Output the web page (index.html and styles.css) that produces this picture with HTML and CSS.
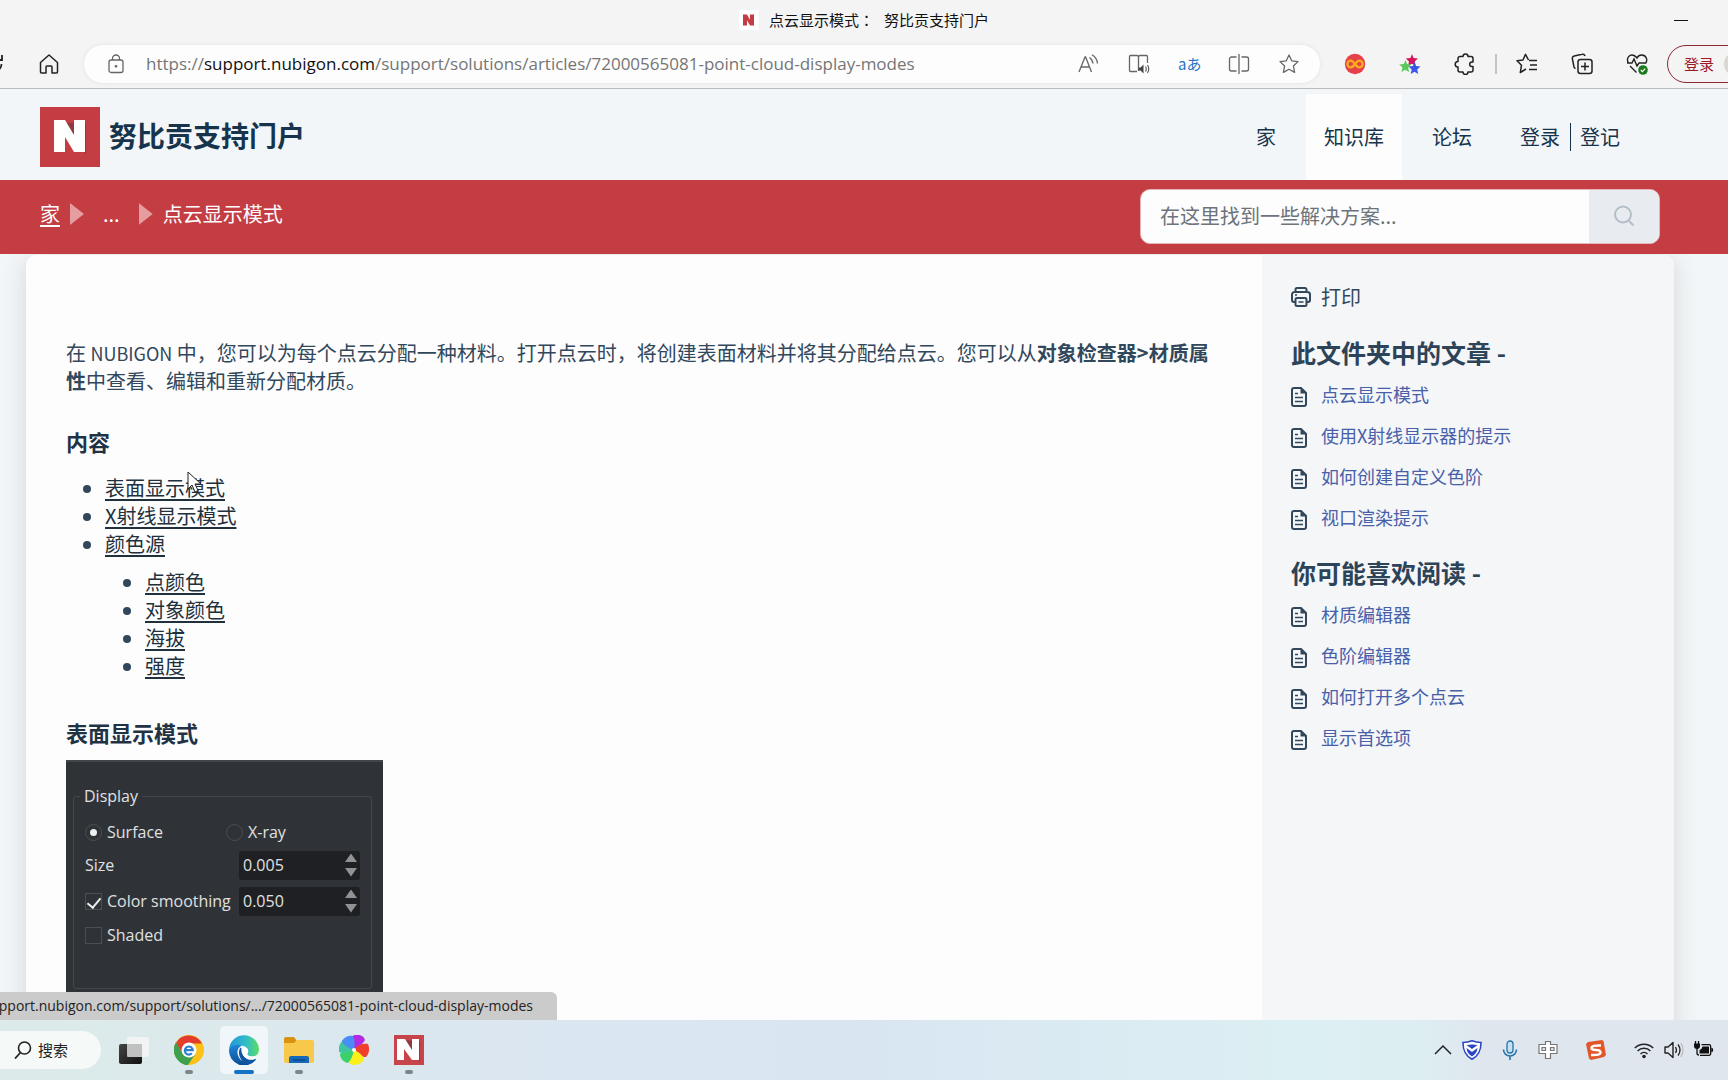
FILE: index.html
```html
<!DOCTYPE html>
<html lang="zh-CN">
<head>
<meta charset="utf-8">
<title>点云显示模式： 努比贡支持门户</title>
<link rel="stylesheet" href="styles.css">
</head>
<body>
<svg width="0" height="0" class="sprite" aria-hidden="true">
  <symbol id="doc" viewBox="0 0 16 20">
    <path d="M3 1h7l5 5v11a2 2 0 0 1-2 2H3a2 2 0 0 1-2-2V3a2 2 0 0 1 2-2z" fill="none" stroke="currentColor" stroke-width="2"/>
    <path d="M9.500 1v5.500H15z" fill="currentColor"/>
    <path d="M4 6.500h3M4 10.500h8M4 14.500h8" stroke="currentColor" stroke-width="1.600"/>
  </symbol>
  <symbol id="nmark" viewBox="0 0 30 30">
    <path d="M0 0h11l8 14V0h11v30H19l-8-14v14H0z" fill="currentColor"/>
  </symbol>
</svg>

<header class="browser">
  <div class="titlebar">
    <div class="tab-title">
      <span class="favicon"><svg width="11" height="12"><use href="#nmark"/></svg></span>
      <span>点云显示模式<span lang="zh-TW" class="colon">：</span>&nbsp;&nbsp;&nbsp;努比贡支持门户</span>
    </div>
    <button class="minimize" aria-label="最小化"></button>
  </div>
  <div class="toolbar">
    <button class="tool reload" aria-label="刷新"><svg width="20" height="20" viewBox="0 0 20 20"><path d="M17.500 10a7.500 7.500 0 1 1-3-6M18 1v5h-5" fill="none" stroke="#222" stroke-width="1.800"/></svg></button>
    <button class="tool home" aria-label="主页"><svg width="20" height="20" viewBox="0 0 20 20"><path d="M1.500 8.500 10 1l8.500 7.500V18a1 1 0 0 1-1 1H13v-6a1 1 0 0 0-1-1H8a1 1 0 0 0-1 1v6H2.500a1 1 0 0 1-1-1z" fill="none" stroke="#222" stroke-width="1.500" stroke-linejoin="round"/></svg></button>
    <div class="address">
      <svg width="16" height="20" viewBox="0 0 16 20"><path d="M4.500 6V4.500a3.500 3.500 0 0 1 7 0V6" fill="none" stroke="#666" stroke-width="1.300"/><rect x="1" y="6" width="14" height="12.500" rx="2" fill="none" stroke="#666" stroke-width="1.300"/><circle cx="8" cy="12.300" r="1.300" fill="#666"/></svg>
      <div class="url">https://<b>support.nubigon.com</b>/support/solutions/articles/72000565081-point-cloud-display-modes</div>
      <div class="address-tools">
        <button aria-label="朗读"><svg width="22" height="20" viewBox="0 0 22 20"><path d="M1 18 7 3h.6L13.500 18M3.500 13h8" fill="none" stroke="#666" stroke-width="1.300"/><path d="M11.500 3.500q3 2 3.500 6M14 .8q5 3 5.500 8.700" fill="none" stroke="#666" stroke-width="1.300"/></svg></button>
        <button aria-label="沉浸式阅读"><svg width="22" height="20" viewBox="0 0 22 20"><path d="M9 17.500H2.500a1 1 0 0 1-1-1V2.500a1 1 0 0 1 1-1H9a1.500 1.500 0 0 1 1.500 1.500v14M10.500 3A1.500 1.500 0 0 1 12 1.500h6.500a1 1 0 0 1 1 1V9" fill="none" stroke="#666" stroke-width="1.300"/><path d="M10.500 13.500h2l3-3v9l-3-3h-2z" fill="#444"/><path d="M17.500 12.500q1.500 2.500 0 5M19.500 11q2.500 4 0 8" fill="none" stroke="#555" stroke-width="1.100"/></svg></button>
        <button class="translate" aria-label="翻译">aあ</button>
        <button aria-label="分屏"><svg width="22" height="20" viewBox="0 0 22 20"><path d="M8.500 3H3.500a2 2 0 0 0-2 2v10a2 2 0 0 0 2 2h5M13.500 3h5a2 2 0 0 1 2 2v10a2 2 0 0 1-2 2h-5M11 0v20" fill="none" stroke="#666" stroke-width="1.300"/></svg></button>
        <button aria-label="收藏"><svg width="22" height="20" viewBox="0 0 22 20"><path d="m11 1 2.700 5.800 6.300.8-4.600 4.400 1.200 6.400L11 15.300l-5.600 3.100L6.600 12 2 7.600l6.300-.8z" fill="none" stroke="#666" stroke-width="1.300" stroke-linejoin="round"/></svg></button>
      </div>
    </div>
    <div class="extensions">
      <button aria-label="Infinity"><svg width="22" height="22" viewBox="0 0 22 22"><circle cx="11" cy="11" r="10.200" fill="#e5414a"/><path d="M11 11C9 8.300 8 7.600 6.800 7.600a3.400 3.400 0 0 0 0 6.800C8 14.400 9 13.700 11 11s3-3.400 4.200-3.400a3.400 3.400 0 0 1 0 6.800C14 14.400 13 13.700 11 11z" fill="none" stroke="#fbad1c" stroke-width="2.300"/></svg></button>
      <button aria-label="扩展"><svg width="22" height="22" viewBox="0 0 22 22"><path d="m13 1 1.500 4 4.500.5-3.300 3 1 4.500-3.700-2.200L9 13l1-4.500-3.200-3L11.500 5z" fill="#d3155b"/><path d="m6.500 7 1.500 4 4.200.5-3 3 .8 4.500-3.800-2.200L2.500 19l1-4.500-3.300-3L5 11z" fill="#5ac85a"/><path d="m15.500 9 1.500 4 4.500.5-3.300 3 1 4.500-3.700-2.200-3.800 2.200 1-4.500-3.200-3L14 13z" fill="#3b55e6"/></svg></button>
      <button aria-label="扩展管理"><svg width="22" height="22" viewBox="0 0 22 22"><path d="M6 3.500h3a2.500 2.500 0 0 1 5 0h3a2 2 0 0 1 2 2V9h-1a2.300 2.300 0 0 0 0 4.600h1V17a2 2 0 0 1-2 2h-3a2.500 2.500 0 0 1-5 0H6a2 2 0 0 1-2-2v-3a2.800 2.800 0 0 1 0-5.600V5.500a2 2 0 0 1 2-2z" fill="none" stroke="#222" stroke-width="1.500" stroke-linejoin="round"/></svg></button>
      <span class="divider"></span>
      <button aria-label="收藏夹"><svg width="22" height="22" viewBox="0 0 22 22"><path d="M13 7.500h8M14 12h7M13 16.500h8" stroke="#222" stroke-width="1.500"/><path d="m12.500 7-3-5.700L7 7l-6 .8 4.500 4.400L4.300 19.500 10 16" fill="none" stroke="#222" stroke-width="1.500" stroke-linejoin="round"/></svg></button>
      <button aria-label="集锦"><svg width="22" height="22" viewBox="0 0 22 22"><path d="M4.500 15.500A2.500 2.500 0 0 1 3 14L1.300 5.500A2.500 2.500 0 0 1 3.200 3L11 1.300A2.500 2.500 0 0 1 14 3" fill="none" stroke="#222" stroke-width="1.500"/><rect x="7" y="6.500" width="14" height="14" rx="2.500" fill="none" stroke="#222" stroke-width="1.500"/><path d="M14 9.500v8M10 13.500h8" stroke="#222" stroke-width="1.500"/></svg></button>
      <button aria-label="浏览器健康"><svg width="22" height="22" viewBox="0 0 22 22"><path d="M2.500 10C-.5 5 4 .5 8 2.500q2 1 3 2.500Q12.500 2 15.500 2c5 0 6.500 5 4 8.500M4 13l6.500 6.500M1 10h5l2-4 3 7 2-3h7" fill="none" stroke="#222" stroke-width="1.400"/><circle cx="17" cy="17" r="4.800" fill="#1c7a1c"/><path d="m14.800 17 1.600 1.600 2.800-3" fill="none" stroke="#fff" stroke-width="1.200"/></svg></button>
    </div>
    <button class="signin">登录<span class="avatar"></span></button>
  </div>
</header>

<div class="viewport">
  <header class="site-header">
    <a class="brand" href="#"><span class="logo"><svg width="32" height="34" viewBox="0 0 32 34"><path d="m2 2 30 32V4z" fill="#8d3a40"/><path d="M0 0h11l9 15V0h11v32H20l-9-15v15H0z" fill="#fff"/></svg></span><span class="brand-name">努比贡支持门户</span></a>
    <nav class="nav">
      <a href="#">家</a>
      <a class="active" href="#">知识库</a>
      <a href="#">论坛</a>
      <span class="account"><a href="#">登录</a><a href="#">登记</a></span>
    </nav>
  </header>

  <section class="band">
    <nav class="crumbs">
      <a href="#">家</a><i class="arrow"></i><span class="dots">...</span><i class="arrow"></i><span>点云显示模式</span>
    </nav>
    <form class="search">
      <input type="text" aria-label="搜索" placeholder="在这里找到一些解决方案...">
      <button type="button" aria-label="搜索"><svg width="22" height="22" viewBox="0 0 22 22"><circle cx="10" cy="9.500" r="8" fill="none" stroke="#b4bec7" stroke-width="2"/><path d="m15.500 15.500 5 5" stroke="#b4bec7" stroke-width="2"/></svg></button>
    </form>
  </section>

  <div class="card">
    <main class="article">
      <p>在 <span class="latin">NUBIGON</span> 中，您可以为每个点云分配一种材料。打开点云时，将创建表面材料并将其分配给点云。您可以从<strong>对象检查器&gt;材质属性</strong>中查看、编辑和重新分配材质。</p>
      <h2>内容</h2>
      <ul>
        <li><a href="#">表面显示模式</a></li>
        <li><a href="#">X射线显示模式</a></li>
        <li><a href="#">颜色源</a>
          <ul>
            <li><a href="#">点颜色</a></li>
            <li><a href="#">对象颜色</a></li>
            <li><a href="#">海拔</a></li>
            <li><a href="#">强度</a></li>
          </ul>
        </li>
      </ul>
      <h2 class="section">表面显示模式</h2>
      <div class="panel">
        <fieldset>
          <legend>Display</legend>
          <div class="row modes">
            <label><input type="radio" name="mode" checked>Surface</label>
            <label><input type="radio" name="mode">X-ray</label>
          </div>
          <div class="row spin-row">
            <label for="size">Size</label>
            <span class="spin"><input id="size" type="text" value="0.005"><i class="up"></i><i class="down"></i></span>
          </div>
          <div class="row spin-row">
            <label><input type="checkbox" checked>Color smoothing</label>
            <span class="spin"><input type="text" aria-label="Color smoothing" value="0.050"><i class="up"></i><i class="down"></i></span>
          </div>
          <div class="row">
            <label><input type="checkbox">Shaded</label>
          </div>
        </fieldset>
      </div>
    </main>
    <aside class="sidebar">
      <a class="print" href="#"><svg width="20" height="20" viewBox="0 0 20 20"><path d="M4.500 5V2.500A1.500 1.500 0 0 1 6 1h8a1.500 1.500 0 0 1 1.500 1.500V5M4.500 15H3a2 2 0 0 1-2-2V7.500A2.500 2.500 0 0 1 3.500 5h13A2.500 2.500 0 0 1 19 7.500V13a2 2 0 0 1-2 2h-1.500" fill="none" stroke="#31475b" stroke-width="2"/><rect x="4.500" y="11" width="11" height="8" rx="1.500" fill="none" stroke="#31475b" stroke-width="2"/><path d="M7.500 15h5M4 8h2" stroke="#31475b" stroke-width="1.500"/></svg>打印</a>
      <h3>此文件夹中的文章 -</h3>
      <ul>
        <li><svg width="16" height="20"><use href="#doc"/></svg><a href="#">点云显示模式</a></li>
        <li><svg width="16" height="20"><use href="#doc"/></svg><a href="#">使用X射线显示器的提示</a></li>
        <li><svg width="16" height="20"><use href="#doc"/></svg><a href="#">如何创建自定义色阶</a></li>
        <li><svg width="16" height="20"><use href="#doc"/></svg><a href="#">视口渲染提示</a></li>
      </ul>
      <h3>你可能喜欢阅读 -</h3>
      <ul>
        <li><svg width="16" height="20"><use href="#doc"/></svg><a href="#">材质编辑器</a></li>
        <li><svg width="16" height="20"><use href="#doc"/></svg><a href="#">色阶编辑器</a></li>
        <li><svg width="16" height="20"><use href="#doc"/></svg><a href="#">如何打开多个点云</a></li>
        <li><svg width="16" height="20"><use href="#doc"/></svg><a href="#">显示首选项</a></li>
      </ul>
    </aside>
  </div>

  <div class="status">https://support.nubigon.com/support/solutions/.../72000565081-point-cloud-display-modes</div>
  <svg class="cursor" width="16" height="24" viewBox="0 0 16 24"><path d="M1 1v17l4-4 3 7 3-1.500-3-6.500h6z" fill="#fff" stroke="#222" stroke-width="1"/></svg>
</div>

<footer class="taskbar">
  <button class="find"><svg width="18" height="18" viewBox="0 0 18 18"><circle cx="10.500" cy="7" r="6" fill="none" stroke="#222" stroke-width="1.600"/><path d="m6.500 11.500-5.500 6" stroke="#222" stroke-width="1.800"/></svg>搜索</button>
  <div class="apps">
    <button aria-label="任务视图"><svg width="30" height="30" viewBox="0 0 30 30"><defs><linearGradient id="tv" x2="1" y2="1"><stop stop-color="#444"/><stop offset="1" stop-color="#111"/></linearGradient></defs><rect x="0" y="9" width="23" height="20" rx="2" fill="url(#tv)"/><rect x="8" y="2" width="22" height="20" rx="2" fill="#f4f4f4" fill-opacity=".9"/><path d="M8 9h15v13H8z" fill="#b4b4b4" fill-opacity=".7"/></svg></button>
    <button class="open" aria-label="Chrome"><svg width="30" height="30" viewBox="0 0 30 30"><circle cx="15" cy="15" r="15" fill="#fbc116"/><path d="M2 7.500A15 15 0 0 1 28 8.500H15z" fill="#e33b2e"/><path d="M2 7.500A15 15 0 0 0 14 30l7.500-11.200L8.500 18.700z" fill="#3fa04f"/><path d="M2 7.500 8.500 18.700 15 8.500z" fill="#e33b2e"/><path d="M2 7.500 8.500 18.700 14 30A15 15 0 0 1 2 7.500z" fill="#3fa04f"/><circle cx="15" cy="15" r="7.500" fill="#fff"/><path d="M10.500 15.200h8.300a4 4 0 1 0-1 3" fill="none" stroke="#2d7fd0" stroke-width="2.200"/></svg></button>
    <button class="open current" aria-label="Edge"><svg width="30" height="30" viewBox="0 0 30 30"><defs><linearGradient id="eg" x1="0" x2="1"><stop stop-color="#2196d8"/><stop offset=".55" stop-color="#30bccb"/><stop offset="1" stop-color="#5bdc62"/></linearGradient><linearGradient id="eb" x2="0" y2="1"><stop stop-color="#1c86d6"/><stop offset="1" stop-color="#0d4b94"/></linearGradient></defs><path d="M.2 13A15 15 0 0 1 30 14c0 5-3 7.500-7 7.500-3.500 0-5.500-1.300-4.500-3 2-3-.5-7.500-6-8C7 10.200 3 11 .2 15z" fill="url(#eg)"/><path d="M0 15C2 10 8 8.700 13 10.500c-5 2-6 8-2.500 13 3 3.700 9 4.500 16.500 1A15 15 0 0 1 0 15z" fill="url(#eb)"/><path d="M11.500 12.500C7.500 19 12 27.500 19 29.500c4-1 7-3.500 8.500-6-6 3-12 .5-13.500-4.500-.6-3-.5-5-2.500-6.500z" fill="#0f55a0"/><path d="M12.500 14c-.8 5.500 4 10.500 10 10.500 2.500 0 4.500-.6 5.700-1.700-.3-1.400-2.700-1.300-5.200-1.300-3.500 0-5.500-1.300-4.500-3 1.500-2.500.5-5.500-2.500-6-2 0-3.300.5-3.500 1.500z" fill="#fff"/></svg></button>
    <button class="open" aria-label="文件资源管理器"><svg width="30" height="30" viewBox="0 0 30 30"><path d="M0 4a2 2 0 0 1 2-2h8l3 4h15v6H0z" fill="#d9940f"/><path d="M0 8h10l3-3h15a2 2 0 0 1 2 2v19a2 2 0 0 1-2 2H2a2 2 0 0 1-2-2z" fill="#f7c84a"/><path d="M5 28v-5a2 2 0 0 1 2-2h16a2 2 0 0 1 2 2v5z" fill="#1668b8"/><path d="M9 25h12" stroke="#0c4a8c" stroke-width="1.500"/></svg></button>
    <button aria-label="照片"><svg width="30" height="30" viewBox="0 0 30 30"><path d="M15 15C10 12 10 4 15 0c6-1 10 1 11 5-3 5-6 7-11 10z" fill="#b32be0"/><path d="M15 15c3-5 8-7 14-6 2 5 1 10-2 13-5 0-9-2-12-7z" fill="#ef3f2f"/><path d="M15 15c5 2 9 5 10 10-4 5-10 6-14 4-1-6 1-10 4-14z" fill="#f9f01c"/><path d="M15 15c-1 5-3 10-6 13-5-1-8-5-8-9 4-4 9-5 14-4z" fill="#3cd06a"/><path d="M15 15C10 17 4 19 0 17c-1-5 1-9 4-12 5 1 10 5 11 10z" fill="#3fc6a0"/><path d="M15 15C9 13 4 10 3 6c2-4 7-6 11-5 2 4 2 9 1 14z" fill="#4a8cf5"/><circle cx="15" cy="15" r="2" fill="#fff"/></svg></button>
    <button class="open" aria-label="Nubigon"><svg width="30" height="30" viewBox="0 0 30 30"><path d="M0 0h30v30H0z" fill="#c7444b"/><path d="m4 5 22 22V6z" fill="#8d3a40"/><path d="M3 4h8l7 11V4h7v21h-7l-8-11v11H3z" fill="#fff"/></svg></button>
  </div>
  <div class="tray">
    <svg width="18" height="20" viewBox="0 0 18 20"><path d="m1 14 8-8 8 8" fill="none" stroke="#222" stroke-width="1.500"/></svg>
    <svg width="20" height="20" viewBox="0 0 20 20"><path d="M10 .8C7 2 4 2.500 1 2.500c0 8 2 13 9 16.700 7-3.700 9-8.700 9-16.700-3 0-6-.5-9-1.700z" fill="#fff" stroke="#2b45c9" stroke-width="1.600"/><path d="M4.500 5q6-1 11 0L10 9zM4.500 8 10 12l5.500-4q-.5 5.500-5.500 8.500Q5 13.500 4.500 8z" fill="#2b45c9"/></svg>
    <svg class="mid" width="16" height="20" viewBox="0 0 16 20"><rect x="5" y="1" width="6" height="12" rx="3" fill="#c5e2f4" stroke="#2673a9" stroke-width="1.300"/><path d="M1.500 9.500a6.500 6.500 0 0 0 13 0M8 16v4" fill="none" stroke="#2673a9" stroke-width="1.600"/></svg>
    <svg class="mid" width="20" height="20" viewBox="0 0 20 20"><path d="M7.500 1.500h5v3H19v9h-6.500v5h-5v-5H1v-9h6.500zM4 7.500v3h3.500v-3zM12.500 7.500v3H16v-3z" fill="#fff" fill-rule="evenodd" stroke="#777" stroke-width="1.200"/></svg>
    <svg class="wide" width="20" height="20" viewBox="0 0 20 20"><path d="m0 4 2-2 14-2 1.500 1L20 15l-2 2-13 3-2-1.500z" fill="#e2562a"/><path d="M15 5.500Q5.500 5 5.500 8q0 2 4.500 2t4.500 2.500q0 3-9.500 2.500" fill="none" stroke="#fff" stroke-width="2.400"/></svg>
    <svg class="wide" width="20" height="20" viewBox="0 0 20 20"><path d="M.8 8a13 13 0 0 1 18.400 0M3.600 11a9 9 0 0 1 12.800 0M6.500 14a5 5 0 0 1 7 0" fill="none" stroke="#222" stroke-width="1.500"/><circle cx="10" cy="16.500" r="1.800" fill="#222"/></svg>
    <svg width="20" height="20" viewBox="0 0 20 20"><path d="M1 7h3l5-4.500v15L4 13H1z" fill="none" stroke="#222" stroke-width="1.400" stroke-linejoin="round"/><path d="M11.500 7q2 3 0 6M14 4.500q4 5.500 0 11" fill="none" stroke="#222" stroke-width="1.300"/><path d="M16.800 3q4.500 7 0 14" fill="none" stroke="#bbb" stroke-width="1.200"/></svg>
    <svg width="20" height="20" viewBox="0 0 20 20"><path d="M1.500 1v3M4.500 1v3M3 8v5q0 2 2 2" fill="none" stroke="#111" stroke-width="1.300"/><path d="M0 3.500h6V6Q6 9 3 9T0 6z" fill="#111"/><path d="M7.500 4.700H15A1.700 1.700 0 0 1 16.700 6.400v7.200a1.700 1.700 0 0 1-1.700 1.700H6" fill="none" stroke="#111" stroke-width="1.300"/><path d="M8.500 6.500H15v7H5.500V10q2.500-.8 3-3.500zM17.300 8h1.200q1.500 2 0 4h-1.200z" fill="#111"/></svg>
  </div>
</footer>
</body>
</html>
```

FILE: styles.css
```css
* { box-sizing: border-box; }

body {
  margin: 0;
  height: 100vh;
  display: flex;
  flex-direction: column;
  overflow: hidden;
  background: #f3f6f8;
  font-family: "Noto Sans CJK SC", sans-serif;
  font-size: 20px;
  line-height: 28px;
  color: #31475b;
}

a { color: inherit; text-decoration: none; }
button { border: 0; padding: 0; background: none; font: inherit; color: inherit; }
svg { display: block; flex: none; }
ul { margin: 0; padding: 0; }
.sprite { position: absolute; }

/* Browser chrome */
.browser { background: #f4f4f4; border-bottom: 1px solid #b9bbbd; }
.titlebar { height: 40px; display: grid; grid-template-columns: 1fr auto 1fr; align-items: center; }
.tab-title { grid-column: 2; display: flex; align-items: center; gap: 10px; font-size: 15px; line-height: 20px; color: #111; }
.colon { font-family: "Noto Sans CJK TC", sans-serif; }
.favicon { width: 20px; height: 20px; display: grid; place-items: center; background: #fff; color: #c33d43; }
.minimize { justify-self: end; width: 14px; height: 1px; margin-right: 40px; background: #111; }

.toolbar { height: 48px; display: flex; align-items: center; padding-bottom: 1px; }
.tool.reload { margin-left: -16px; }
.tool.home { margin-left: 35px; }
.address {
  flex: 1;
  height: 38px;
  margin-left: 25px;
  padding: 0 20px 0 24px;
  display: flex;
  align-items: center;
  gap: 22px;
  border-radius: 19px;
  background: #fdfdfd;
  box-shadow: 0 0 4px #e2e2e2;
}
.url { flex: 1; font-family: "Open Sans", sans-serif; font-size: 17px; line-height: 24px; color: #757575; white-space: nowrap; }
.url b { font-weight: 400; color: #111; }
.address-tools { display: flex; align-items: center; gap: 28px; }
.address-tools button { width: 22px; white-space: nowrap; }
.translate { font-size: 15px; line-height: 20px; color: #2474c8; }
.extensions { display: flex; align-items: center; gap: 33px; margin: 0 19px 0 24px; }
.divider { width: 2px; height: 20px; margin: 0 -14px; background: #c4c4c4; }
.signin {
  flex: none;
  width: 80px;
  height: 38px;
  margin-right: -19px;
  padding-left: 16px;
  display: flex;
  align-items: center;
  gap: 10px;
  border: 1px solid #8c2632;
  border-radius: 19px;
  font-size: 15px;
  color: #a01828;
  white-space: nowrap;
}
.avatar { flex: none; width: 24px; height: 24px; border-radius: 12px; background: #d8d8d0; }

/* Support portal */
.viewport { position: relative; flex: 1; min-height: 0; overflow: hidden; }
.site-header { height: 91px; padding: 0 108px 0 40px; display: flex; justify-content: space-between; align-items: center; color: #16344c; }
.brand { display: flex; align-items: center; gap: 9px; padding-top: 4px; font-size: 28px; line-height: 40px; font-weight: 700; }
.brand-name { padding-bottom: 4px; }
.logo { width: 60px; height: 60px; display: grid; place-items: center; background: #c33d43; }
.nav { display: flex; align-items: center; gap: 12px; align-self: flex-end; }
.nav > * { display: flex; align-items: center; height: 86px; padding: 0 18px; }
.nav .active { background: #fdfdfd; }
.nav .account { padding-right: 0; }
.account a + a { margin-left: 10px; padding-left: 9px; border-left: 1px solid #16344c; }

.band { position: relative; z-index: 1; height: 74px; padding: 0 68px 2px 40px; display: flex; justify-content: space-between; align-items: center; background: #c33d43; color: #fff; }
.crumbs { display: flex; align-items: center; padding-bottom: 4px; }
.crumbs a { text-decoration: underline; text-underline-offset: 3px; }
.arrow { width: 14px; height: 22px; margin: 0 10px; background: #e59da0; clip-path: polygon(0 0, 100% 50%, 0 100%); }
.dots { padding: 0 9px; }
.search { width: 520px; height: 55px; display: flex; border: 1px solid #e5b5b8; border-radius: 10px; overflow: hidden; background: #fdfdfd; }
.search input { flex: 1; min-width: 0; border: 0; padding: 0 19px; background: none; font: inherit; color: #333; }
.search input::placeholder { color: #6d737a; opacity: 1; }
.search button { width: 70px; display: grid; place-items: center; background: #e8ecf0; }

.card { margin: 1px 54px 0 26px; display: grid; grid-template-columns: 3fr 1fr; border-radius: 10px; background: #fdfdfd; box-shadow: 0 4px 24px #d3d7da; overflow: hidden; }
.article { padding: 84px 40px 80px; }
.article p { margin: 0 0 30px; }
.latin { font-size: 18px; }
.article h2 { margin: 0 0 17px; font-size: 22px; line-height: 32px; color: #1f3345; }
.article ul { padding-left: 39px; list-style: disc; }
.article ul ul { margin-top: 10px; padding-left: 40px; }
.article li a { color: #21303d; text-decoration: underline; text-decoration-thickness: 2px; text-underline-offset: 3px; }
.article .section { margin: 36px 0 12px; }

.panel { width: 317px; height: 240px; padding: 22px 11px 4px 7px; border-top: 2px solid #42464b; background: #2f3338; color: #e0e0e0; font-family: "Open Sans", sans-serif; font-size: 16px; line-height: 24px; }
.panel fieldset { height: 205px; margin: 0; padding: 9px 11px 0; border: 1px solid #43484d; border-radius: 3px; }
.panel legend { margin-left: -5px; padding: 0 4px; }
.row { display: flex; align-items: center; height: 32px; }
.row label { display: flex; align-items: center; gap: 5px; white-space: nowrap; }
.modes { display: grid; grid-template-columns: 141px 1fr; height: 30px; }
.spin-row { justify-content: space-between; height: 36px; }
.panel input[type="radio"], .panel input[type="checkbox"] { appearance: none; width: 17px; height: 17px; margin: 0; border: 1px solid #4a4f55; display: grid; place-items: center; }
.panel input[type="radio"] { border-radius: 9px; }
.panel input[type="radio"]:checked::before { content: ""; width: 7px; height: 7px; border-radius: 4px; background: #eee; }
.panel input[type="checkbox"]:checked::before { content: ""; width: 6px; height: 11px; border: solid #eee; border-width: 0 2px 2px 0; transform: rotate(40deg); }
.spin { width: 121px; height: 29px; display: grid; grid-template-columns: 1fr 12px; grid-template-rows: 1fr 1fr; column-gap: 4px; row-gap: 6px; padding: 3px; border-radius: 3px; background: #1f2023; }
.spin input { grid-row: 1 / 3; min-width: 0; border: 0; padding: 0 1px; background: none; font: inherit; color: inherit; }
.spin i { background: #909294; }
.up { clip-path: polygon(50% 0, 100% 100%, 0 100%); }
.down { clip-path: polygon(0 0, 100% 0, 50% 100%); }

.sidebar { padding: 28px 29px; background: #f4f6f8; }
.print { display: flex; align-items: center; gap: 10px; }
.sidebar h3 { margin: 23px 0 6px; font-size: 25px; line-height: 36px; color: #2c4358; }
.sidebar li { display: flex; align-items: center; gap: 14px; height: 41px; font-size: 18px; color: #31475b; }
.sidebar li a { padding-bottom: 6px; color: #4860a8; }
.sidebar ul + h3 { margin-top: 14px; }

.status { position: absolute; left: 0; bottom: 0; width: 557px; height: 28px; padding-right: 24px; display: flex; justify-content: flex-end; overflow: hidden; border-radius: 0 6px 0 0; background: #cbcbcb; font-family: "Open Sans", sans-serif; font-size: 14px; line-height: 28px; color: #222; white-space: nowrap; }
.cursor { position: absolute; left: 187px; top: 382px; }

/* Desktop taskbar */
.taskbar { height: 60px; display: flex; align-items: center; background: linear-gradient(90deg, #dcebe9, #dbe6f1 30%, #d9e6f2 50%, #dceff2 75%, #dceef2 82%, #e0e6ee 86%, #e0e6ee); }
.find { width: 101px; height: 38px; padding-left: 14px; display: flex; align-items: center; gap: 6px; border-radius: 0 19px 19px 0; background: #f5faf9; font-size: 15px; color: #222; }
.apps { display: flex; gap: 7px; margin-left: 9px; }
.apps button { position: relative; width: 48px; height: 48px; display: grid; place-items: center; border-radius: 5px; }
.apps .current { background: #f1f6fa; }
.apps .open::after { content: ""; position: absolute; left: 20px; bottom: 0; width: 8px; height: 4px; border-radius: 2px; background: #7d858a; }
.apps .current::after { left: 14px; width: 20px; background: #1473c5; }
.tray { margin-left: auto; padding-right: 14px; display: flex; align-items: center; }
.tray svg { margin-left: 10px; }
.tray .mid { margin-left: 20px; }
.tray .wide { margin-left: 28px; }
```
